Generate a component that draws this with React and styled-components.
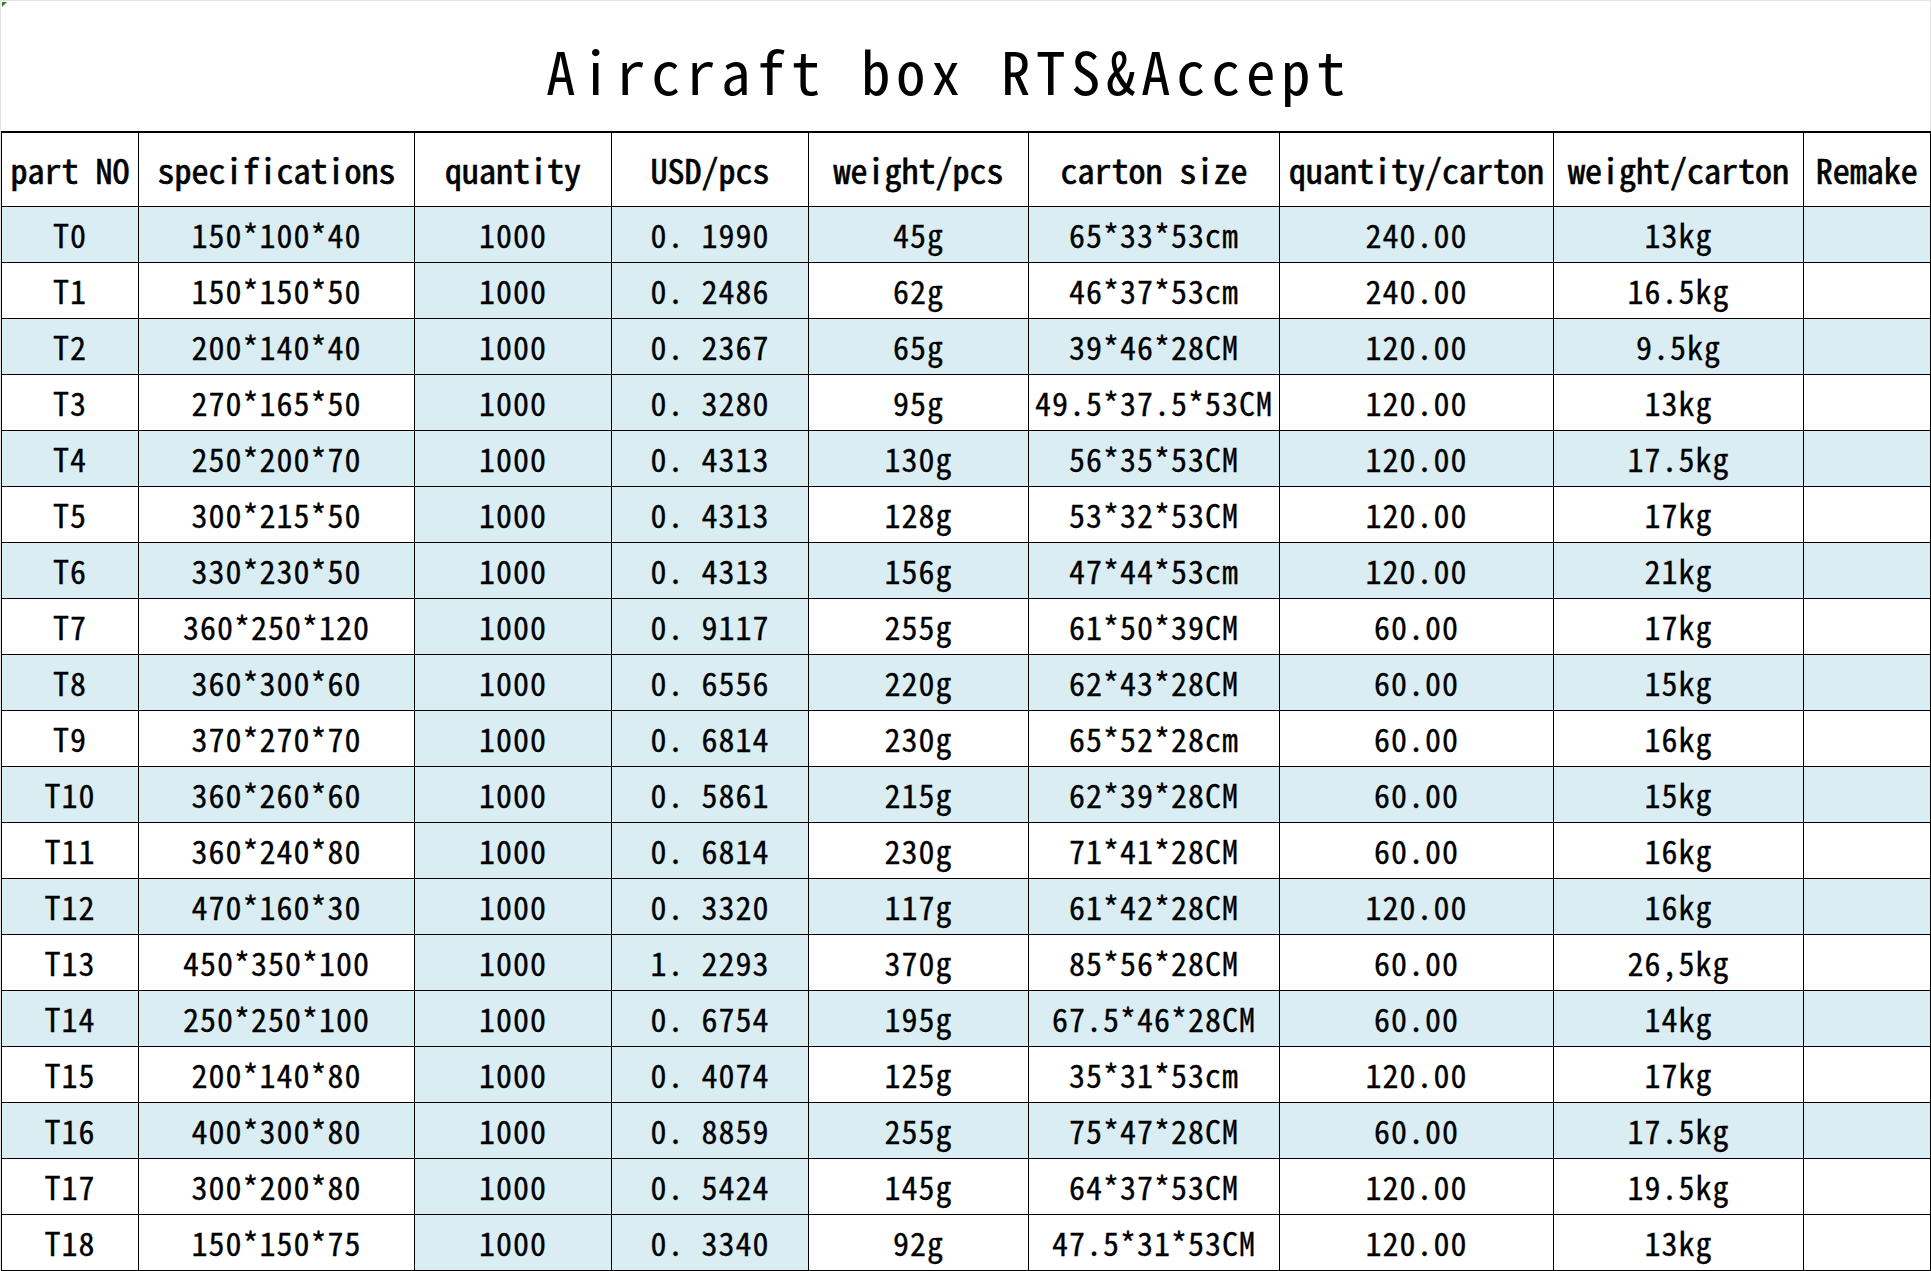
import React from "react";
import styled, { createGlobalStyle } from "styled-components";

const GlobalStyle = createGlobalStyle`
  html, body {
    margin: 0;
    padding: 0;
    background: #ffffff;
  }
  body {
    font-family: "Noto Sans Mono CJK JP", "Noto Sans CJK JP", "Liberation Mono", monospace;
    color: #000;
  }
`;

const Sheet = styled.div`
  position: relative;
  width: 1931px;
  box-sizing: border-box;
  border-top: 1px solid #e2e2e2;
  border-left: 1px solid #e2e2e2;
  border-right: 1px solid #e2e2e2;
`;

const Corner = styled.div`
  position: absolute;
  top: 1px;
  left: 1px;
  width: 0;
  height: 0;
  border-top: 5px solid #1e8a2e;
  border-right: 5px solid transparent;
`;

const Title = styled.h1`
  margin: 0;
  height: 130px;
  display: flex;
  align-items: center;
  justify-content: center;
  padding: 6px 34px 0 0;
  box-sizing: border-box;
  font-size: 59px;
  font-weight: 400;
  letter-spacing: 5.5px;
  white-space: pre;
`;

const Table = styled.table`
  width: 100%;
  border-collapse: collapse;
  table-layout: fixed;
  border-top: 2px solid #000;
  border-right: 2px solid #000;
  border-bottom: 2px solid #000;
`;

const Head = styled.th`
  height: 73px;
  padding: 0;
  border: 1px solid #000;
  font-size: 34px;
  font-weight: 400;
  -webkit-text-stroke: 0.7px #000;
  text-align: center;
  white-space: nowrap;
  background: #fff;
`;

const Cell = styled.td`
  height: 53px;
  padding: 0 0 2px;
  border: 1px solid #000;
  font-size: 32px;
  font-weight: 400;
  -webkit-text-stroke: 0.3px #000;
  letter-spacing: 1px;
  text-align: center;
  white-space: nowrap;
  background: ${(p) => (p.$shade ? "#daedf2" : "#ffffff")};
`;

const columns = [
  { title: "part NO", width: 137 },
  { title: "specifications", width: 276 },
  { title: "quantity", width: 197, always: true },
  { title: "USD/pcs", width: 197, always: true },
  { title: "weight/pcs", width: 220 },
  { title: "carton size", width: 251 },
  { title: "quantity/carton", width: 274 },
  { title: "weight/carton", width: 250 },
  { title: "Remake", width: 127 },
];

// last field marks the rows painted light blue
const rows = [
  ["T0", "150*100*40", "1000", "0. 1990", "45g", "65*33*53cm", "240.00", "13kg", "", true],
  ["T1", "150*150*50", "1000", "0. 2486", "62g", "46*37*53cm", "240.00", "16.5kg", "", false],
  ["T2", "200*140*40", "1000", "0. 2367", "65g", "39*46*28CM", "120.00", "9.5kg", "", true],
  ["T3", "270*165*50", "1000", "0. 3280", "95g", "49.5*37.5*53CM", "120.00", "13kg", "", false],
  ["T4", "250*200*70", "1000", "0. 4313", "130g", "56*35*53CM", "120.00", "17.5kg", "", true],
  ["T5", "300*215*50", "1000", "0. 4313", "128g", "53*32*53CM", "120.00", "17kg", "", false],
  ["T6", "330*230*50", "1000", "0. 4313", "156g", "47*44*53cm", "120.00", "21kg", "", true],
  ["T7", "360*250*120", "1000", "0. 9117", "255g", "61*50*39CM", "60.00", "17kg", "", false],
  ["T8", "360*300*60", "1000", "0. 6556", "220g", "62*43*28CM", "60.00", "15kg", "", true],
  ["T9", "370*270*70", "1000", "0. 6814", "230g", "65*52*28cm", "60.00", "16kg", "", false],
  ["T10", "360*260*60", "1000", "0. 5861", "215g", "62*39*28CM", "60.00", "15kg", "", true],
  ["T11", "360*240*80", "1000", "0. 6814", "230g", "71*41*28CM", "60.00", "16kg", "", false],
  ["T12", "470*160*30", "1000", "0. 3320", "117g", "61*42*28CM", "120.00", "16kg", "", true],
  ["T13", "450*350*100", "1000", "1. 2293", "370g", "85*56*28CM", "60.00", "26,5kg", "", false],
  ["T14", "250*250*100", "1000", "0. 6754", "195g", "67.5*46*28CM", "60.00", "14kg", "", true],
  ["T15", "200*140*80", "1000", "0. 4074", "125g", "35*31*53cm", "120.00", "17kg", "", false],
  ["T16", "400*300*80", "1000", "0. 8859", "255g", "75*47*28CM", "60.00", "17.5kg", "", true],
  ["T17", "300*200*80", "1000", "0. 5424", "145g", "64*37*53CM", "120.00", "19.5kg", "", false],
  ["T18", "150*150*75", "1000", "0. 3340", "92g", "47.5*31*53CM", "120.00", "13kg", "", false],
];

const App = () => {
  return (
    <>
      <GlobalStyle />
      <Sheet>
        <Corner />
        <Title>Aircraft box RTS&amp;Accept</Title>
        <Table>
          <colgroup>
            {columns.map((c) => (
              <col key={c.title} style={{ width: c.width }} />
            ))}
          </colgroup>
          <thead>
            <tr>
              {columns.map((c) => (
                <Head key={c.title}>{c.title}</Head>
              ))}
            </tr>
          </thead>
          <tbody>
            {rows.map((row) => {
              const shaded = row[9];
              return (
                <tr key={row[0]}>
                  {row.slice(0, 9).map((value, j) => (
                    <Cell key={j} $shade={shaded || columns[j].always}>
                      {value}
                    </Cell>
                  ))}
                </tr>
              );
            })}
          </tbody>
        </Table>
      </Sheet>
    </>
  );
};

export default App;
